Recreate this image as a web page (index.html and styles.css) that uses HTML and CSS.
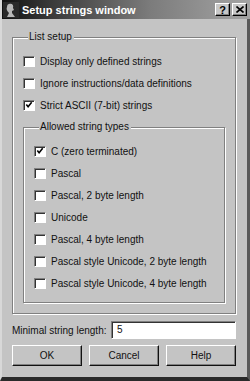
FILE: index.html
```html
<!DOCTYPE html>
<html lang="en">
<head>
  <meta charset="UTF-8" />
  <title>Setup strings window</title>
  <link rel="stylesheet" href="styles.css">
</head>
<body>
  <div class="window">
    <div class="titlebar">
      <svg class="app-icon" width="16" height="16" viewBox="0 0 16 16">
        <rect width="16" height="16" fill="#2a2a2a"/>
        <path d="M6 2 C9 1 11 3 10 6 L11 8 L9 9 L9 11 L12 15 L4 15 L6 11 C4 9 3 7 4 5 C4 3 5 2 6 2 Z" fill="#b8b8b8"/>
      </svg>
      <span class="title">Setup strings window</span>
      <div class="title-buttons">
        <span class="tbtn">?</span>
        <span class="tbtn">
          <svg width="8" height="7" viewBox="0 0 8 7"><path d="M0.5 0.5 L7.5 6.5 M7.5 0.5 L0.5 6.5" stroke="#000" stroke-width="1.6"/></svg>
        </span>
      </div>
    </div>

    <div class="content">
      <fieldset class="group outer">
        <legend>List setup</legend>
        <label class="check"><span class="box"></span>Display only defined strings</label>
        <label class="check"><span class="box"></span>Ignore instructions/data definitions</label>
        <label class="check"><span class="box checked"><svg viewBox="0 0 9 9"><path d="M1.5 4 L3.5 6.5 L7.5 1.5" fill="none" stroke="#000" stroke-width="1.8"/></svg></span>Strict ASCII (7-bit) strings</label>

        <fieldset class="group inner">
          <legend>Allowed string types</legend>
          <label class="check"><span class="box checked"><svg viewBox="0 0 9 9"><path d="M1.5 4 L3.5 6.5 L7.5 1.5" fill="none" stroke="#000" stroke-width="1.8"/></svg></span>C (zero terminated)</label>
          <label class="check"><span class="box"></span>Pascal</label>
          <label class="check"><span class="box"></span>Pascal, 2 byte length</label>
          <label class="check"><span class="box"></span>Unicode</label>
          <label class="check"><span class="box"></span>Pascal, 4 byte length</label>
          <label class="check"><span class="box"></span>Pascal style Unicode, 2 byte length</label>
          <label class="check"><span class="box"></span>Pascal style Unicode, 4 byte length</label>
        </fieldset>
      </fieldset>

      <div class="field-row">
        <label for="minlen">Minimal string length:</label>
        <div class="input" id="minlen">5</div>
      </div>

      <div class="buttons">
        <span class="btn">OK</span>
        <span class="btn">Cancel</span>
        <span class="btn">Help</span>
      </div>
    </div>
  </div>
</body>
</html>
```

FILE: styles.css
```css
html, body {
  margin: 0;
  padding: 0;
  background: #c4c4c4;
}
body {
  font-family: "Liberation Sans", Arial, sans-serif;
  font-size: 10px;
  color: #111;
}
.window {
  width: 250px;
  height: 381px;
  box-sizing: border-box;
  background: #c4c4c4;
  border-left: 2px solid #d8d8d8;
  border-right: 3px solid #5a5a5a;
  border-bottom: 4px solid #2a2a2a;
  display: flex;
  flex-direction: column;
}
.titlebar {
  height: 19px;
  display: flex;
  align-items: center;
  padding: 0 3px 0 1px;
  background: linear-gradient(to right, #111 0%, #3a3a3a 20%, #7c7c7c 60%, #a4a4a4 100%);
  margin-right: -3px;
}
.app-icon {
  margin-right: 3px;
}
.title {
  color: #fff;
  font-weight: bold;
  font-size: 11px;
  flex: 1;
}
.title-buttons {
  display: flex;
  gap: 2px;
}
.tbtn {
  width: 15px;
  height: 13px;
  box-sizing: border-box;
  background: #c8c8c8;
  border-top: 1px solid #fff;
  border-left: 1px solid #fff;
  border-right: 1px solid #000;
  border-bottom: 1px solid #000;
  box-shadow: inset -1px -1px 0 #808080;
  display: flex;
  align-items: center;
  justify-content: center;
  font-weight: bold;
  font-size: 11px;
  color: #000;
}
.content {
  padding: 12px 11px 0 10px;
}
.group {
  margin: 0;
  border: 1px solid #808080;
  box-shadow: inset 1px 1px 0 #fff, 1px 1px 0 #fff;
  min-width: 0;
}
.group legend {
  background: #c4c4c4;
  padding: 0 2px 0 1px;
  margin-left: 5px;
  line-height: 12px;
}
.outer {
  padding: 7px 10px 10px 10px;
}
.inner {
  margin-top: 5px;
  padding: 7px 10px 8px 10px;
}
.check {
  display: flex;
  align-items: center;
  height: 22px;
  gap: 5px;
}
.box {
  width: 12px;
  height: 11px;
  box-sizing: border-box;
  background: #fff;
  border-top: 1px solid #808080;
  border-left: 1px solid #808080;
  border-right: 1px solid #fff;
  border-bottom: 1px solid #fff;
  box-shadow: inset 1px 1px 0 #333;
  display: flex;
  align-items: center;
  justify-content: center;
}
.box svg {
  width: 8px;
  height: 8px;
}
.field-row {
  display: flex;
  align-items: center;
  margin-top: 7px;
  height: 18px;
}
.field-row label {
  width: 99px;
}
.input {
  flex: 1;
  height: 18px;
  box-sizing: border-box;
  background: #fff;
  border-top: 1px solid #808080;
  border-left: 1px solid #808080;
  border-right: 1px solid #fff;
  border-bottom: 1px solid #fff;
  box-shadow: inset 1px 1px 0 #333;
  padding-left: 5px;
  line-height: 16px;
}
.buttons {
  display: grid;
  grid-template-columns: repeat(3, 1fr);
  gap: 7px;
  margin-top: 6px;
}
.btn {
  height: 21px;
  box-sizing: border-box;
  border-top: 1px solid #fff;
  border-left: 1px solid #fff;
  border-right: 1px solid #111;
  border-bottom: 1px solid #111;
  box-shadow: inset -1px -1px 0 #808080;
  display: flex;
  align-items: center;
  justify-content: center;
}
```
